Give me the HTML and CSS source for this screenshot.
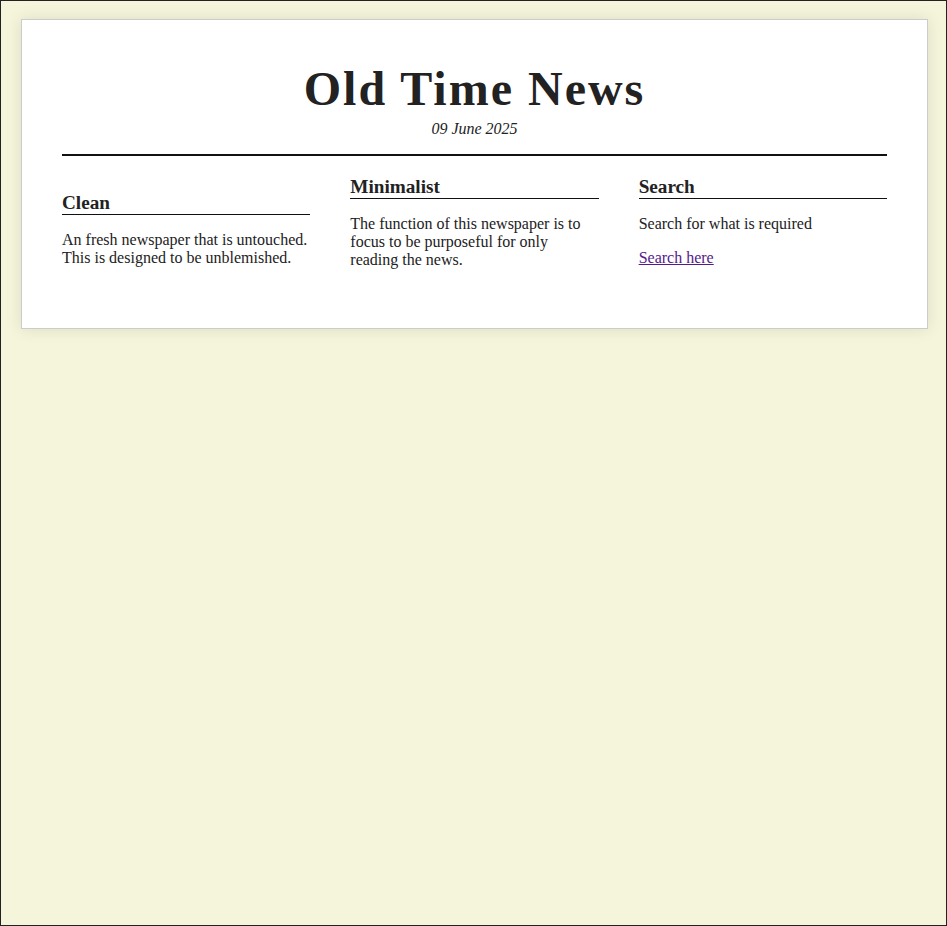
FILE: index.html
```html
<!DOCTYPE html>
<html lang="en">
<head>
<meta charset="utf-8">
<title>Old Time News</title>
<link rel="stylesheet" href="styles.css">
</head>
<body>
<main class="paper">
  <header class="masthead">
    <h1 class="masthead__title">Old Time News</h1>
    <p class="masthead__date">09 June 2025</p>
  </header>
  <section class="columns">
    <article class="column column--low">
      <h2 class="column__title">Clean</h2>
      <p class="column__text">An fresh newspaper that is untouched. This is designed to be unblemished.</p>
    </article>
    <article class="column">
      <h2 class="column__title">Minimalist</h2>
      <p class="column__text">The function of this newspaper is to focus to be purposeful for only reading the news.</p>
    </article>
    <article class="column">
      <h2 class="column__title">Search</h2>
      <p class="column__text">Search for what is required</p>
      <p class="column__text"><a class="column__link" href="#search">Search here</a></p>
    </article>
  </section>
</main>
</body>
</html>
```
FILE: styles.css
```css
html, body {
  margin: 0;
  padding: 0;
}
body {
  box-sizing: border-box;
  min-height: 100vh;
  border: 1px solid #222;
  background: #f5f5dc;
  color: #222;
  font-family: "Liberation Serif", "Times New Roman", serif;
  font-size: 16px;
  padding: 18px 18px 18px 20px;
}
.paper {
  background: #fff;
  border: 1px solid #ccc;
  box-shadow: 0 0 15px rgba(0, 0, 0, 0.1);
  padding: 41px 40px 43px;
}
.masthead {
  text-align: center;
  border-bottom: 2px solid #111;
  padding-bottom: 16px;
}
.masthead__title {
  margin: 0;
  font-size: 48px;
  font-weight: bold;
  letter-spacing: 2px;
  line-height: normal;
}
.masthead__date {
  margin: 4px 0 0;
  font-style: italic;
}
.columns {
  display: grid;
  grid-template-columns: repeat(3, 1fr);
  gap: 40px;
  margin-top: 20px;
  align-items: start;
}
.column--low {
  margin-top: 16px;
}
.column__title {
  margin: 0;
  font-size: 19.2px;
  font-weight: bold;
  border-bottom: 1px solid #111;
}
.column__text {
  margin: 16px 0;
}
.column__link {
  color: #551a8b;
}
```
